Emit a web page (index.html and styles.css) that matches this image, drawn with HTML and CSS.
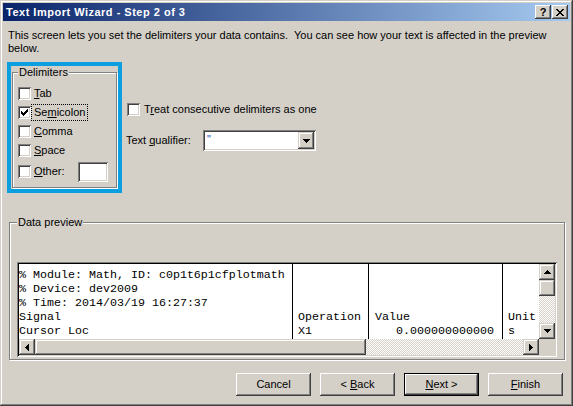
FILE: index.html
```html
<!DOCTYPE html>
<html>
<head>
<meta charset="utf-8">
<title>Text Import Wizard - Step 2 of 3</title>
<link rel="stylesheet" href="styles.css">
</head>
<body>
<div class="window">
  <div class="titlebar">
    <span class="title">Text Import Wizard - Step 2 of 3</span>
    <div class="caption-btns">
      <span class="cap-btn help">?</span>
      <span class="cap-btn close"><svg width="8" height="7" viewBox="0 0 8 7" shape-rendering="crispEdges"><path d="M0 0h2v1H0zM6 0h2v1H6zM1 1h2v1H1zM5 1h2v1H5zM2 2h4v1H2zM3 3h2v1H3zM2 4h4v1H2zM1 5h2v1H1zM5 5h2v1H5zM0 6h2v1H0zM6 6h2v1H6z"/></svg></span>
    </div>
  </div>
  <div class="body">
    <p class="intro">This screen lets you set the delimiters your data contains.&nbsp; You can see how your text is affected in the preview<br>below.</p>
    <div class="options">
      <div class="hl">
        <fieldset class="group delims">
          <legend>Delimiters</legend>
          <div class="cb-row"><span class="cb"></span><span class="lbl"><u>T</u>ab</span></div>
          <div class="cb-row"><span class="cb checked"><svg width="7" height="7" viewBox="0 0 7 7" shape-rendering="crispEdges"><path d="M6 0h1v3h-1v1h-1v1h-1v1h-1v1h-1v-1h-1v-1h-1v-3h1v1h1v1h1v-1h1v-1h1z"/></svg></span><span class="lbl focus">Se<u>m</u>icolon</span></div>
          <div class="cb-row"><span class="cb"></span><span class="lbl"><u>C</u>omma</span></div>
          <div class="cb-row"><span class="cb"></span><span class="lbl"><u>S</u>pace</span></div>
          <div class="cb-row other-row"><span class="cb"></span><span class="lbl"><u>O</u>ther:</span><span class="textbox"></span></div>
        </fieldset>
      </div>
      <div class="side">
        <div class="cb-row treat"><span class="cb"></span><span class="lbl">T<u>r</u>eat consecutive delimiters as one</span></div>
        <div class="qual-row">
          <span class="qual-lbl">Text <u>q</u>ualifier:</span>
          <div class="combo">
            <span class="combo-val">"</span>
            <span class="combo-btn"><svg width="7" height="4" viewBox="0 0 7 4" shape-rendering="crispEdges"><path d="M0 0h7v1h-1v1h-1v1h-1v1h-1v-1h-1v-1h-1v-1h-1z"/></svg></span>
          </div>
        </div>
      </div>
    </div>
    <fieldset class="group preview-group">
      <legend>Data preview</legend>
      <div class="pane">
        <div class="data">
          <div class="col c1">
            <div>% Module: Math, ID: c0p1t6p1cfplotmath</div>
            <div>% Device: dev2009</div>
            <div>% Time: 2014/03/19 16:27:37</div>
            <div>Signal</div>
            <div>Cursor Loc</div>
          </div>
          <div class="col c2">
            <div></div><div></div><div></div>
            <div>Operation</div>
            <div>X1</div>
          </div>
          <div class="col c3">
            <div></div><div></div><div></div>
            <div>Value</div>
            <div class="num">0.000000000000</div>
          </div>
          <div class="col c4">
            <div></div><div></div><div></div>
            <div>Unit</div>
            <div>s</div>
          </div>
        </div>
        <div class="vscroll">
          <span class="sb-btn"><svg width="7" height="4" viewBox="0 0 7 4" shape-rendering="crispEdges"><path d="M3 0h1v1h1v1h1v1h1v1H0V3h1V2h1V1h1z"/></svg></span>
          <span class="sb-thumb"></span>
          <span class="sb-track"></span>
          <span class="sb-btn"><svg width="7" height="4" viewBox="0 0 7 4" shape-rendering="crispEdges"><path d="M0 0h7v1h-1v1h-1v1h-1v1h-1v-1h-1v-1h-1v-1h-1z"/></svg></span>
        </div>
        <div class="hscroll">
          <span class="sb-btn"><svg width="4" height="7" viewBox="0 0 4 7" shape-rendering="crispEdges"><path d="M3 0h1v7h-1v-1h-1v-1h-1v-1h-1v-1h1v-1h1v-1h1z"/></svg></span>
          <span class="sb-thumb h"></span>
          <span class="sb-track"></span>
          <span class="sb-btn"><svg width="4" height="7" viewBox="0 0 4 7" shape-rendering="crispEdges"><path d="M0 0h1v1h1v1h1v1h1v1h-1v1h-1v1h-1v1h-1z"/></svg></span>
        </div>
        <div class="corner"></div>
      </div>
    </fieldset>
    <div class="buttons">
      <button class="btn">Cancel</button>
      <button class="btn">&lt; <u>B</u>ack</button>
      <button class="btn default"><u>N</u>ext &gt;</button>
      <button class="btn"><u>F</u>inish</button>
    </div>
  </div>
</div>
</body>
</html>
```
FILE: styles.css
```css
* { box-sizing: border-box; }
html, body { margin: 0; padding: 0; }
body {
  width: 573px;
  height: 406px;
  overflow: hidden;
  background: #d4d0c8;
  font: 11px/13px "Liberation Sans", Arial, sans-serif;
  color: #000;
}
u { text-decoration: underline; text-underline-offset: 1px; }

.window {
  width: 573px;
  height: 406px;
  padding: 3px;
  background: #d4d0c8;
  box-shadow: inset -1px -1px #404040, inset 1px 1px #d4d0c8,
              inset -2px -2px #808080, inset 2px 2px #fff;
  display: flex;
  flex-direction: column;
}

.titlebar {
  height: 18px;
  background: linear-gradient(to right, #0a246a, #a6caf0);
  display: flex;
  align-items: center;
  padding: 0 2px 0 3px;
}
.title { color: #fff; font-weight: bold; flex: 1; white-space: nowrap; letter-spacing: 0.5px; }
.caption-btns { display: flex; gap: 1px; }
.cap-btn {
  width: 16px;
  height: 14px;
  background: #d4d0c8;
  box-shadow: inset -1px -1px #404040, inset 1px 1px #fff,
              inset -2px -2px #808080, inset 2px 2px #d4d0c8;
  display: flex;
  align-items: center;
  justify-content: center;
  font-weight: bold;
  font-size: 11px;
  line-height: 12px;
}
.cap-btn.help { padding-bottom: 1px; }
.cap-btn svg { display: block; }

.body { flex: 1; display: flex; flex-direction: column; }
.intro { margin: 8px 0 0 5px; white-space: nowrap; }

.options { display: flex; margin-top: 7px; padding-left: 4px; }
.hl {
  width: 115px;
  height: 131px;
  border: 4px solid #0c9fdf;
  padding: 0 1px 1px 1px;
}

.group {
  margin: 0;
  padding: 0;
  border: 1px solid #808080;
  box-shadow: 1px 1px 0 #fff, inset 1px 1px 0 #fff;
  min-width: 0;
}
.group legend {
  padding: 0 1px;
  margin-left: 0;
  background: #d4d0c8;
  line-height: 13px;
}
.delims { height: 122px; padding: 5px 0 0 5px; }

.cb-row { display: flex; align-items: center; height: 19px; }
.cb {
  width: 13px;
  height: 13px;
  flex: none;
  background: #fff;
  box-shadow: inset 1px 1px #808080, inset -1px -1px #fff,
              inset 2px 2px #404040, inset -2px -2px #d4d0c8;
  display: flex;
  align-items: center;
  justify-content: center;
}
.cb svg { display: block; }
.lbl { margin-left: 2px; padding: 0 1px; white-space: nowrap; }
.lbl.focus { outline: 1px dotted #000; outline-offset: 1px; }
.other-row { height: 21px; margin-top: 1px; }
.textbox {
  width: 30px;
  height: 20px;
  margin-left: auto;
  margin-right: 8px;
  background: #fff;
  box-shadow: inset 1px 1px #808080, inset -1px -1px #fff,
              inset 2px 2px #404040, inset -2px -2px #d4d0c8;
}

.side { margin-left: 5px; padding-top: 38px; }
.treat .lbl { margin-left: 3px; }
.qual-row { display: flex; align-items: center; margin-top: 11px; }
.qual-lbl { width: 77px; margin-left: -1px; white-space: nowrap; }
.combo {
  width: 113px;
  height: 21px;
  padding: 2px;
  background: #fff;
  box-shadow: inset 1px 1px #808080, inset -1px -1px #fff,
              inset 2px 2px #404040, inset -2px -2px #d4d0c8;
  display: flex;
}
.combo-val { flex: 1; padding-left: 2px; line-height: 15px; color: #1a4fb0; }
.combo-btn {
  width: 16px;
  height: 17px;
  background: #d4d0c8;
  box-shadow: inset -1px -1px #404040, inset 1px 1px #d4d0c8,
              inset -2px -2px #808080, inset 2px 2px #fff;
  display: flex;
  align-items: center;
  justify-content: center;
}
.combo-btn svg, .sb-btn svg { display: block; }

.preview-group {
  margin: 23px 0 0 6px;
  width: 556px;
  height: 144px;
  padding: 0 0 0 7px;
}
.pane {
  margin-top: 33px;
  width: 540px;
  height: 95px;
  box-shadow: inset 1px 1px #808080, inset -1px -1px #fff,
              inset 2px 2px #000, inset -2px -2px #d4d0c8;
  padding: 2px;
  display: grid;
  grid-template-columns: 520px 16px;
  grid-template-rows: 75px 16px;
}
.data {
  background: #fff;
  display: flex;
  overflow: hidden;
  font: 11.67px/14px "Liberation Mono", "Courier New", monospace;
}
.col { height: 75px; padding-top: 4px; border-right: 1px solid #000; overflow: hidden; flex: none; }
.col > div { height: 14px; white-space: pre; }
.c1 { width: 274px; }
.c2 { width: 76px; padding-left: 5px; }
.c3 { width: 134px; padding-left: 6px; padding-right: 8px; }
.c3 .num { text-align: right; }
.c4 { width: 36px; padding-left: 5px; border-right: none; }

.vscroll { display: flex; flex-direction: column; }
.hscroll { display: flex; }
.sb-btn, .sb-thumb {
  width: 16px;
  height: 16px;
  flex: none;
  background: #d4d0c8;
  box-shadow: inset -1px -1px #404040, inset 1px 1px #d4d0c8,
              inset -2px -2px #808080, inset 2px 2px #fff;
  display: flex;
  align-items: center;
  justify-content: center;
}
.sb-thumb.h { width: 331px; }
.sb-track {
  flex: 1;
  background: repeating-conic-gradient(#fff 0 25%, #d4d0c8 0 50%) 0 0 / 2px 2px;
}
.corner { background: #d4d0c8; }

.buttons {
  display: flex;
  justify-content: flex-end;
  gap: 9px;
  margin-top: 13px;
  padding-right: 7px;
}
.btn {
  width: 75px;
  height: 23px;
  border: none;
  padding: 0;
  background: #d4d0c8;
  font: 11px/13px "Liberation Sans", Arial, sans-serif;
  color: #000;
  box-shadow: inset -1px -1px #404040, inset 1px 1px #fff,
              inset -2px -2px #808080, inset 2px 2px #d4d0c8;
}
.btn.default {
  box-shadow: inset 0 0 0 1px #000, inset -2px -2px #404040,
              inset 2px 2px #fff, inset -3px -3px #808080;
}
```
